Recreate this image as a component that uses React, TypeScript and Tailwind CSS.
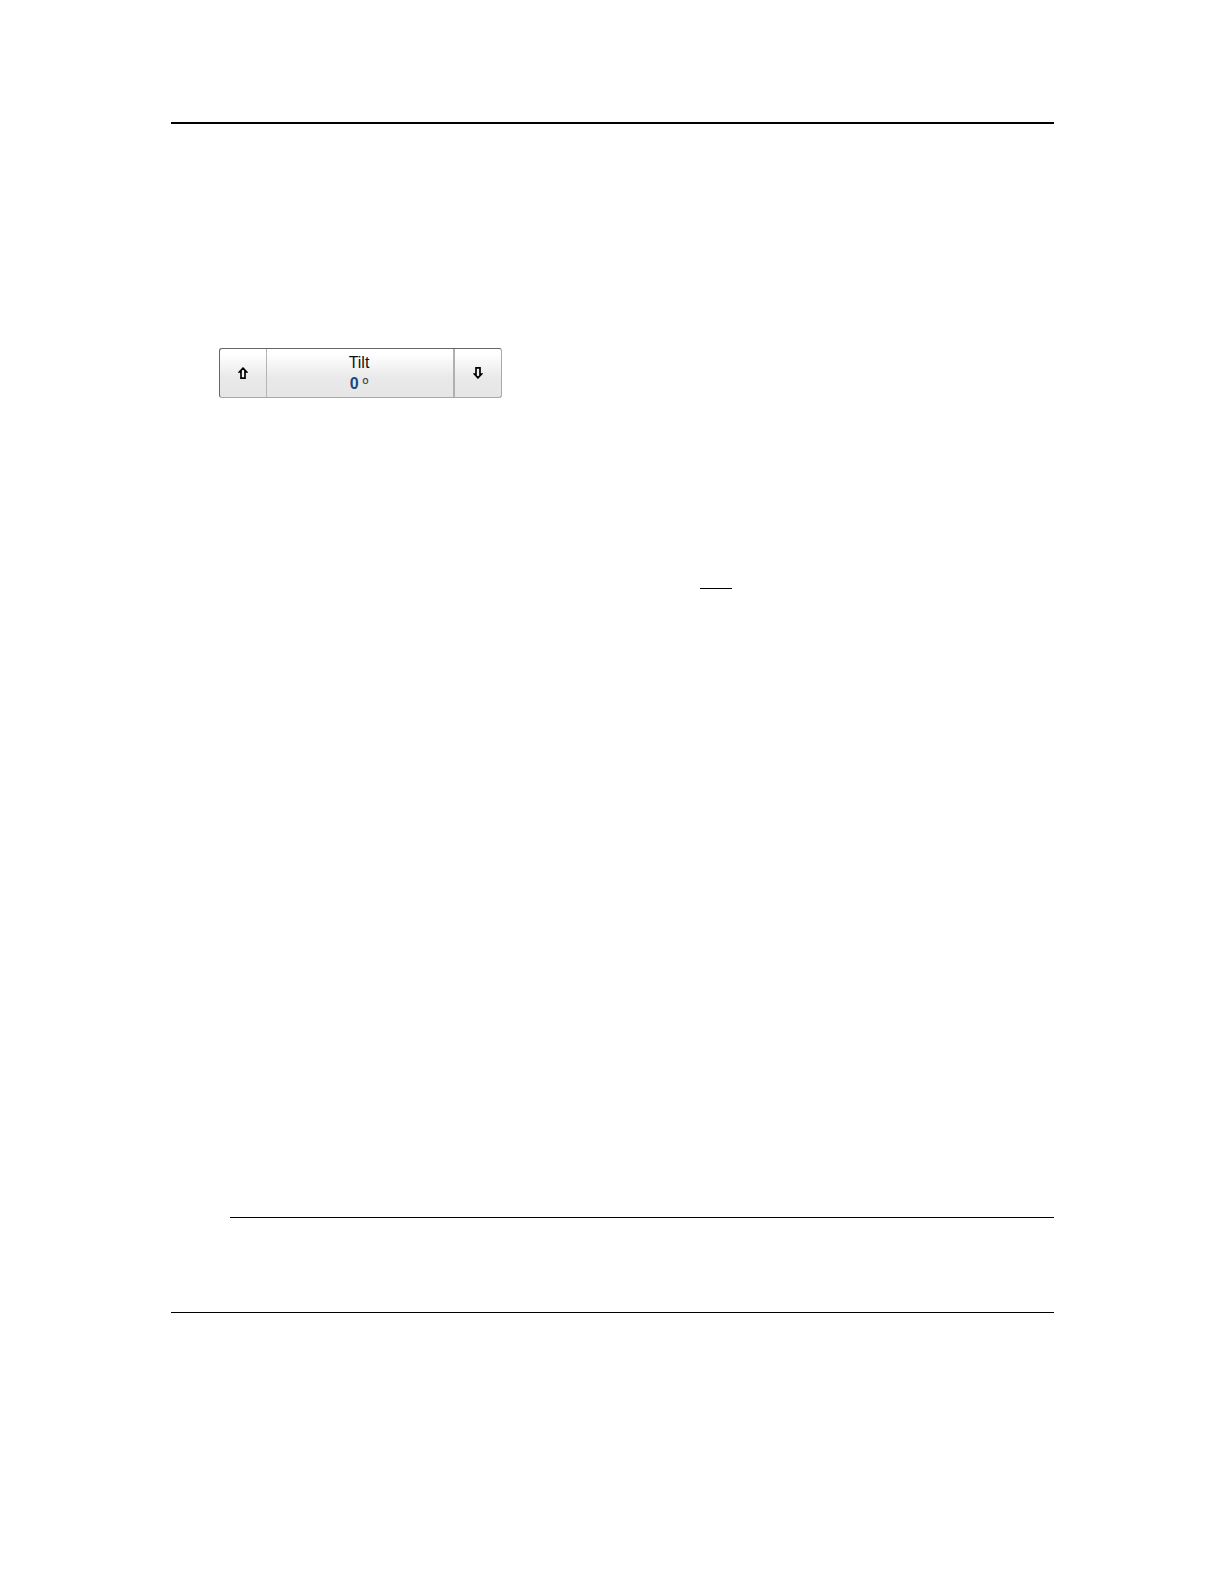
import React, { useState } from 'react';

const ArrowIcon: React.FC<{ className?: string }> = ({ className }) => (
  <svg viewBox="0 0 10 12" className={`w-[10px] h-3 ${className ?? ''}`} fill="#f4f4f4" stroke="#000" strokeWidth="1.7" strokeLinejoin="miter" aria-hidden="true">
    <path d="M5 1.2 L8.4 4.8 H7 V11.2 H3 V4.8 H1.6 Z" />
  </svg>
);

const STEP_BUTTON = 'flex items-center justify-center';

const TiltControl: React.FC = () => {
  const [tilt, setTilt] = useState(0);

  return (
    <div role="group" aria-label="Tilt" className="w-[283px] h-[50px] flex items-stretch rounded-[3px] overflow-hidden border border-[#a8a8a8] border-t-[#666] border-l-[#666] bg-linear-to-b from-white from-10% via-[#e9e9e9] via-60% to-[#e6e6e6]">
      <button type="button" aria-label="Tilt up" onClick={() => setTilt(tilt + 1)} className={`${STEP_BUTTON} w-[47px] border-r border-[#b4b4b4]`}>
        <ArrowIcon />
      </button>
      <button type="button" className="flex-1 flex flex-col items-center justify-center pr-0.5 text-base leading-[21px] text-[#111]">
        <span>Tilt</span>
        <span className="flex gap-1">
          <span className="font-bold text-[#164a7e]">{tilt}</span>
          <span className="text-[#444]">º</span>
        </span>
      </button>
      <button type="button" aria-label="Tilt down" onClick={() => setTilt(tilt - 1)} className={`${STEP_BUTTON} w-12 border-l-2 border-[#b0b0b0]`}>
        <ArrowIcon className="rotate-180" />
      </button>
    </div>
  );
};

export default function App() {
  return (
    <div className="min-h-screen bg-white pt-[122px] pb-[271px] pl-[171px] pr-[170px] font-['Liberation_Sans',Arial,sans-serif]">
      <hr className="border-t-2 border-black" />
      <main className="flex flex-col pt-56">
        <div className="pl-12">
          <TiltControl />
        </div>
        <hr className="mt-[190px] ml-[529px] w-8 border-black" />
        <hr className="mt-[628px] ml-[59px] border-black" />
      </main>
      <hr className="mt-[94px] border-black" />
    </div>
  );
}
